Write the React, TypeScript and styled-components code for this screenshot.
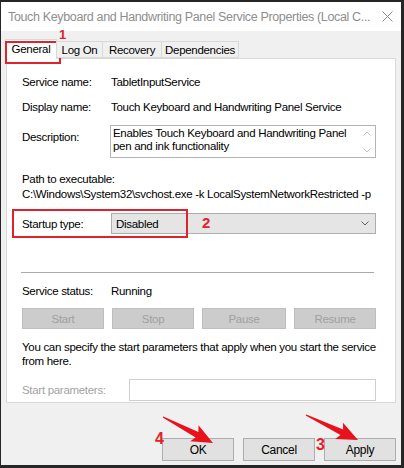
import React from "react";
import styled, { createGlobalStyle } from "styled-components";

const GlobalStyle = createGlobalStyle`
  html, body { margin: 0; padding: 0; background: #fff; }
  * { box-sizing: border-box; }
`;

const FONT = `"Liberation Sans", Arial, sans-serif`;
const RED = "#e0222b";

const Frame = styled.div`
  position: relative;
  width: 404px;
  height: 468px;
  font-family: ${FONT};
  font-size: 11.5px;
  letter-spacing: -0.3px;
  color: #000;
`;

const Window = styled.div`
  width: 404px;
  height: 468px;
  border-style: solid;
  border-color: #262626;
  border-width: 2px 3px 3px 1px;
  background: #f0f0f0;
  display: flex;
  flex-direction: column;
`;

const TitleBar = styled.div`
  height: 29px;
  flex: none;
  background: #fff;
  display: flex;
  align-items: center;
  justify-content: space-between;
  padding: 0 8px 0 7px;
`;

const Title = styled.span`
  font-size: 12.5px;
  letter-spacing: -0.35px;
  color: #8e8e8e;
  white-space: nowrap;
`;

const Body = styled.div`
  flex: 1;
  display: flex;
  flex-direction: column;
  padding: 8px 5px 0 4px;
`;

const TabStrip = styled.div`
  display: flex;
  align-items: flex-end;
  height: 19px;
  position: relative;
  z-index: 1;
`;

const Tab = styled.div<{ $w: number; $active?: boolean; $marked?: boolean }>`
  position: relative;
  width: ${(p) => p.$w}px;
  height: ${(p) => (p.$active ? 20 : 17)}px;
  margin-bottom: ${(p) => (p.$active ? -1 : 0)}px;
  background: ${(p) => (p.$active ? "#fff" : "#f0f0f0")};
  border: 1px solid #d9d9d9;
  border-bottom: ${(p) => (p.$active ? "none" : "1px solid #d9d9d9")};
  margin-left: ${(p) => (p.$active ? 0 : -1)}px;
  display: flex;
  align-items: center;
  justify-content: center;
  white-space: nowrap;
  padding-bottom: ${(p) => (p.$active ? 2 : 0)}px;
  &::after {
    content: "";
    display: ${(p) => (p.$marked ? "block" : "none")};
    position: absolute;
    left: -1px;
    top: 1px;
    width: 52px;
    height: 19px;
    border: 2px solid ${RED};
  }
`;

const Panel = styled.div`
  height: 345px;
  background: #fff;
  border: 1px solid #d9d9d9;
  margin-left: 1px;
  padding: 15px 19px 0 15px;
  display: flex;
  flex-direction: column;
`;

const Row = styled.div<{ $mt?: number; $h?: number; $align?: string }>`
  position: relative;
  display: flex;
  align-items: ${(p) => p.$align || "center"};
  margin-top: ${(p) => p.$mt || 0}px;
  min-height: ${(p) => p.$h || 16}px;
  line-height: 16px;
`;

const Label = styled.span<{ $w?: number; $dim?: boolean; $pt?: number }>`
  flex: none;
  width: ${(p) => p.$w || 89}px;
  color: ${(p) => (p.$dim ? "#a3a3a3" : "#000")};
  padding-top: ${(p) => p.$pt || 0}px;
  white-space: nowrap;
`;

const Value = styled.span`
  white-space: nowrap;
`;

const DescBox = styled.div`
  position: relative;
  width: 267px;
  height: 33px;
  margin-left: -1px;
  border: 1px solid #b4b4b4;
  background: #fff;
  padding: 1px 20px 0 2px;
  line-height: 13px;
  white-space: nowrap;
`;

const ScrollTrack = styled.div`
  position: absolute;
  right: 0;
  top: 0;
  bottom: 0;
  width: 17px;
  display: flex;
  flex-direction: column;
  justify-content: space-between;
  align-items: center;
  padding: 5px 0 4px;
`;

const TextBlock = styled.div<{ $mt?: number; $lh?: number }>`
  margin-top: ${(p) => p.$mt || 0}px;
  line-height: ${(p) => p.$lh || 15}px;
  white-space: nowrap;
`;

const Select = styled.div`
  width: 267px;
  height: 21px;
  border: 1px solid #adadad;
  background: #e5e5e5;
  display: flex;
  align-items: center;
  justify-content: space-between;
  padding: 0 6px 0 4px;
`;

const Marker = styled.div`
  position: absolute;
  left: -10px;
  top: -4px;
  width: 176px;
  height: 29px;
  border: 2px solid ${RED};
  pointer-events: none;
`;

const Separator = styled.div<{ $mt: number }>`
  margin-top: ${(p) => p.$mt}px;
  margin-left: -1px;
  width: 353px;
  height: 1px;
  background: #a9a9a9;
`;

const ButtonRow = styled.div<{ $mt: number }>`
  margin-top: ${(p) => p.$mt}px;
  display: grid;
  grid-template-columns: 82px 82px 84px 82px;
  justify-content: space-between;
`;

const ControlButton = styled.div`
  height: 21px;
  background: #cccccc;
  border: 1px solid #bfbfbf;
  color: #a0a0a0;
  display: flex;
  align-items: center;
  justify-content: center;
`;

const Input = styled.div`
  width: 249px;
  height: 22px;
  border: 1px solid #cfcfcf;
  background: #fff;
`;

const Footer = styled.div`
  margin-top: 35px;
  display: flex;
  justify-content: flex-end;
  gap: 9px;
`;

const DialogButton = styled.div`
  width: 72px;
  height: 23px;
  background: #e1e1e1;
  border: 1px solid #adadad;
  display: flex;
  align-items: center;
  justify-content: center;
  font-size: 12px;
`;

const Num = styled.span<{ $x: number; $y: number; $size: number }>`
  position: absolute;
  left: ${(p) => p.$x}px;
  top: ${(p) => p.$y}px;
  font-family: ${FONT};
  font-weight: bold;
  font-size: ${(p) => p.$size}px;
  line-height: ${(p) => p.$size}px;
  letter-spacing: 0;
  color: ${RED};
`;

const Overlay = styled.svg`
  position: absolute;
  left: 0;
  top: 0;
  pointer-events: none;
`;

type Pt = [number, number];

function arrowPoints(t: Pt, p: Pt, headLen = 18, headHalf = 9, tailHalf = 0.7, neckHalf = 3): string {
  const dx = p[0] - t[0];
  const dy = p[1] - t[1];
  const len = Math.hypot(dx, dy);
  const ux = dx / len;
  const uy = dy / len;
  const nx = -uy;
  const ny = ux;
  const bx = p[0] - ux * headLen;
  const by = p[1] - uy * headLen;
  const wx = bx - ux * 3;
  const wy = by - uy * 3;
  const pts: Pt[] = [
    [t[0] + nx * tailHalf, t[1] + ny * tailHalf],
    [bx + nx * neckHalf, by + ny * neckHalf],
    [wx + nx * headHalf, wy + ny * headHalf],
    [p[0], p[1]],
    [wx - nx * headHalf, wy - ny * headHalf],
    [bx - nx * neckHalf, by - ny * neckHalf],
    [t[0] - nx * tailHalf, t[1] - ny * tailHalf],
  ];
  return pts.map((q) => `${q[0].toFixed(1)},${q[1].toFixed(1)}`).join(" ");
}

const Chevron = ({ up, color, w = 8 }: { up?: boolean; color: string; w?: number }) => (
  <svg width={w} height={5} viewBox="0 0 8 5">
    <path d={up ? "M0.5 4.5 L4 1 L7.5 4.5" : "M0.5 0.5 L4 4 L7.5 0.5"} fill="none" stroke={color} strokeWidth="1" />
  </svg>
);

export default function App() {
  return (
    <>
      <GlobalStyle />
      <Frame>
        <Window>
          <TitleBar>
            <Title>Touch Keyboard and Handwriting Panel Service Properties (Local C...</Title>
            <svg width="11" height="11" viewBox="0 0 11 11">
              <path d="M0.5 0.5 L10.5 10.5 M10.5 0.5 L0.5 10.5" stroke="#8a8a8a" strokeWidth="1" />
            </svg>
          </TitleBar>
          <Body>
            <TabStrip>
              <Tab $w={52} $active $marked>General</Tab>
              <Tab $w={47}>Log On</Tab>
              <Tab $w={60}>Recovery</Tab>
              <Tab $w={78}>Dependencies</Tab>
            </TabStrip>
            <Panel>
              <Row>
                <Label>Service name:</Label>
                <Value>TabletInputService</Value>
              </Row>
              <Row $mt={9}>
                <Label>Display name:</Label>
                <Value>Touch Keyboard and Handwriting Panel Service</Value>
              </Row>
              <Row $mt={10} $align="flex-start" $h={33}>
                <Label $pt={4}>Description:</Label>
                <DescBox>
                  Enables Touch Keyboard and Handwriting Panel
                  <br />
                  pen and ink functionality
                  <ScrollTrack>
                    <Chevron up color="#c4c4c4" />
                    <Chevron color="#c4c4c4" />
                  </ScrollTrack>
                </DescBox>
              </Row>
              <TextBlock $mt={14}>
                Path to executable:
                <br />
                C:\Windows\System32\svchost.exe -k LocalSystemNetworkRestricted -p
              </TextBlock>
              <Row $mt={11} $h={21}>
                <Label>Startup type:</Label>
                <Select>
                  <span>Disabled</span>
                  <Chevron color="#606060" />
                </Select>
                <Marker />
              </Row>
              <Separator $mt={38} />
              <Row $mt={10}>
                <Label>Service status:</Label>
                <Value>Running</Value>
              </Row>
              <ButtonRow $mt={9}>
                <ControlButton>Start</ControlButton>
                <ControlButton>Stop</ControlButton>
                <ControlButton>Pause</ControlButton>
                <ControlButton>Resume</ControlButton>
              </ButtonRow>
              <TextBlock $mt={11} $lh={14}>
                You can specify the start parameters that apply when you start the service
                <br />
                from here.
              </TextBlock>
              <Row $mt={11} $h={22}>
                <Label $w={107} $dim>
                  Start parameters:
                </Label>
                <Input />
              </Row>
            </Panel>
            <Footer>
              <DialogButton>OK</DialogButton>
              <DialogButton>Cancel</DialogButton>
              <DialogButton>Apply</DialogButton>
            </Footer>
          </Body>
        </Window>
        <Num $x={59} $y={28} $size={13}>1</Num>
        <Num $x={202} $y={215} $size={15}>2</Num>
        <Num $x={316} $y={437} $size={16}>3</Num>
        <Num $x={155} $y={431} $size={16}>4</Num>
        <Overlay width={404} height={468} viewBox="0 0 404 468">
          <polygon points={arrowPoints([163, 417], [213, 443])} fill="#e8121c" />
          <polygon points={arrowPoints([306, 415], [358, 440])} fill="#e8121c" />
        </Overlay>
      </Frame>
    </>
  );
}
